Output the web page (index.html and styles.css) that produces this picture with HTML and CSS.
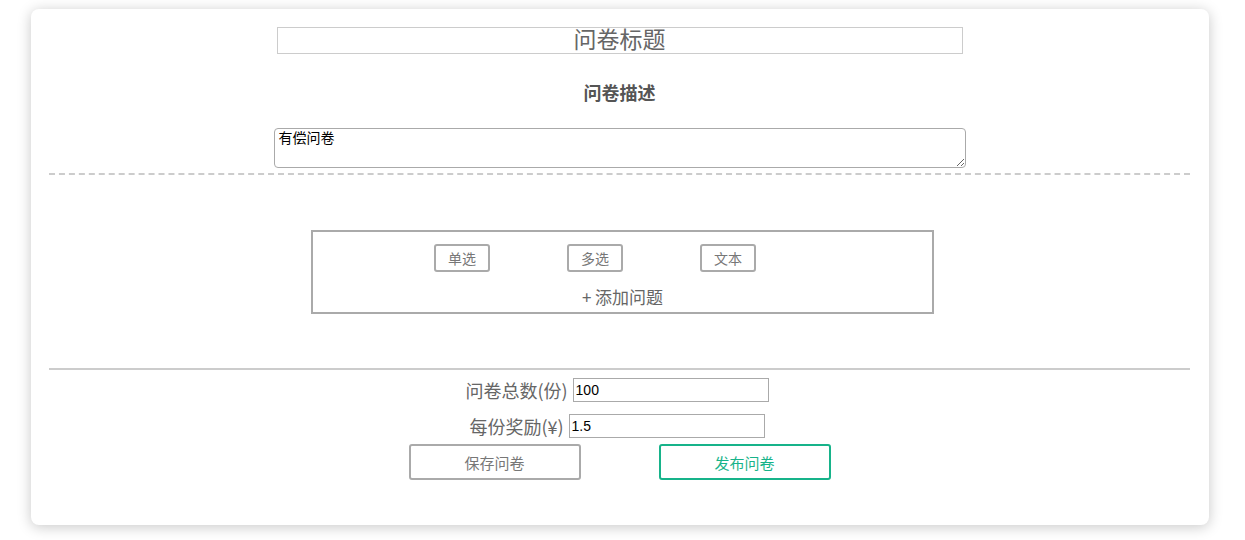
FILE: index.html
```html
<!DOCTYPE html>
<html lang="zh-CN">
<head>
<meta charset="utf-8">
<title>问卷</title>
<link rel="stylesheet" href="styles.css">
</head>
<body>
<div class="card">
  <input class="title-input" type="text" placeholder="问卷标题">
  <h3 class="desc-title">问卷描述</h3>
  <textarea class="desc">有偿问卷</textarea>
  <div class="dashed"></div>
  <div class="qbox">
    <div class="qtypes">
      <button class="qbtn">单选</button>
      <button class="qbtn">多选</button>
      <button class="qbtn">文本</button>
    </div>
    <div class="add">+ 添加问题</div>
  </div>
  <div class="solid"></div>
  <div class="row row1"><label>问卷总数(份)</label><input class="num" type="text" value="100"></div>
  <div class="row row2"><label>每份奖励(¥)</label><input class="num" type="text" value="1.5"></div>
  <div class="actions">
    <button class="act save">保存问卷</button>
    <button class="act publish">发布问卷</button>
  </div>
</div>
</body>
</html>
```
FILE: styles.css
```css
* { box-sizing: border-box; }
html, body { margin: 0; background: #fff; }
body {
  font-family: "Noto Sans CJK SC", "Liberation Sans", sans-serif;
  color: #666;
}
.card {
  width: 1178px;
  margin: 9px 0 15px 31px;
  background: #fff;
  border-radius: 8px;
  box-shadow: 0 2px 14px rgba(0,0,0,0.22);
  padding: 18px 19px 45px 18px;
}
.title-input {
  display: block;
  width: 686px;
  height: 27px;
  margin: 0 auto;
  padding: 0 0 5px;
  border: 1px solid #ccc;
  font-family: inherit;
  font-size: 23px;
  text-align: center;
  color: #666;
  outline: none;
}
.title-input::placeholder { color: #666; }
.desc-title {
  margin: 26px 0 24px;
  height: 24px;
  line-height: 24px;
  font-size: 18px;
  font-weight: bold;
  color: #555;
  text-align: center;
}
.desc {
  display: block;
  width: 692px;
  height: 40px;
  margin: 0 auto;
  padding: 0 4px;
  border: 1px solid #aaa;
  border-radius: 4px;
  font-family: "Noto Sans CJK SC", sans-serif;
  font-size: 14px;
  line-height: 16px;
  color: #000;
  resize: vertical;
}
.dashed {
  margin-top: 5px;
  border-top: 2px dashed #ccc;
}
.qbox {
  width: 623px;
  height: 84px;
  margin: 55px 0 0 262px;
  border: 2px solid #aaa;
  padding: 12px 0 0;
}
.qtypes {
  display: flex;
  gap: 77px;
  padding-left: 121px;
}
.qbtn {
  width: 56px;
  height: 28px;
  padding: 0;
  border: 2px solid #aaa;
  border-radius: 3px;
  background: #fff;
  font-family: inherit;
  font-size: 14px;
  color: #777;
}
.add {
  margin-top: 14px;
  text-align: center;
  font-size: 17px;
  line-height: 22px;
  color: #666;
}
.solid {
  margin-top: 54px;
  border-top: 2px solid #ccc;
}
.row {
  display: flex;
  justify-content: center;
  align-items: center;
  gap: 5px;
  height: 24px;
  padding-right: 5px;
}
.row1 { margin-top: 8px; }
.row2 { margin-top: 12px; }
.row label {
  font-size: 18px;
  color: #666;
}
.num {
  width: 196px;
  height: 24px;
  padding: 0 2px;
  border: 1px solid #aaa;
  font-family: "Liberation Sans", sans-serif;
  font-size: 14px;
  color: #000;
  outline: none;
}
.actions {
  display: flex;
  justify-content: center;
  gap: 78px;
  margin-top: 6px;
}
.act {
  width: 172px;
  height: 36px;
  padding: 0;
  background: #fff;
  border: 2px solid #aaa;
  border-radius: 3px;
  font-family: inherit;
  font-size: 15px;
  color: #777;
}
.publish {
  border-color: #17b38a;
  color: #17b38a;
}
```
